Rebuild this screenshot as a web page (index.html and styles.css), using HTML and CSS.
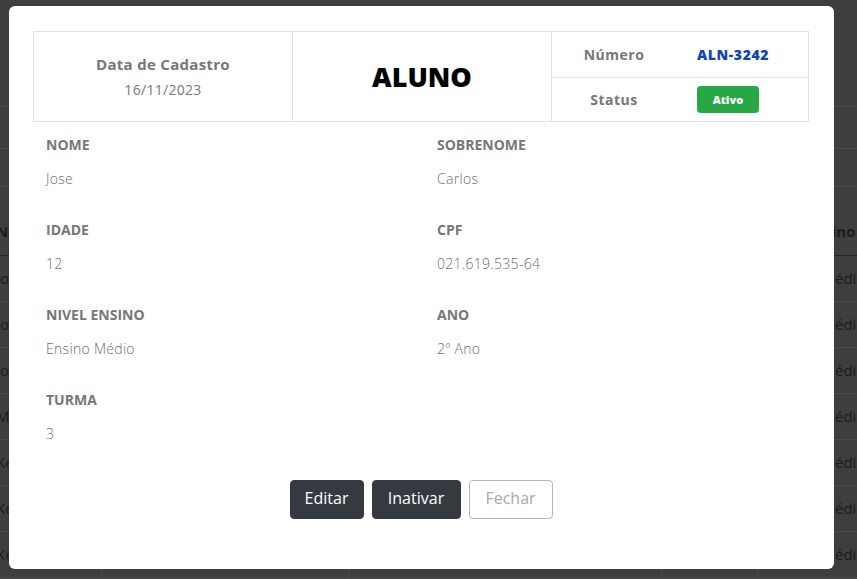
FILE: index.html
```html
<!DOCTYPE html>
<html lang="pt-BR">
<head>
<meta charset="utf-8">
<title>Aluno</title>
<link rel="stylesheet" href="styles.css">
</head>
<body>
<div class="page">
  <div class="band band-top"></div>
  <div class="band band-mid"></div>
  <div class="band band-search"></div>
  <div class="band band-gap"></div>
  <table class="bg-table">
    <thead>
      <tr><th class="c1"><span class="shift">Nome</span></th><th class="c2"></th><th class="c3"></th><th class="c4"></th><th class="c5 h5">Ensino</th></tr>
    </thead>
    <tbody>
      <tr><td class="c1"><span class="shift">Joao</span></td><td></td><td></td><td></td><td class="c5">Médio</td></tr>
      <tr><td class="c1"><span class="shift">Jose</span></td><td></td><td></td><td></td><td class="c5">Médio</td></tr>
      <tr><td class="c1"><span class="shift">Joana</span></td><td></td><td></td><td></td><td class="c5">Médio</td></tr>
      <tr><td class="c1"><span class="shift">Maria</span></td><td></td><td></td><td></td><td class="c5">Médio</td></tr>
      <tr><td class="c1"><span class="shift">Kethlen</span></td><td></td><td></td><td></td><td class="c5">Médio</td></tr>
      <tr><td class="c1"><span class="shift">Kethlen</span></td><td></td><td></td><td></td><td class="c5">Médio</td></tr>
      <tr><td class="c1"><span class="shift">Kethlen</span></td><td></td><td></td><td></td><td class="c5">Médio</td></tr>
    </tbody>
  </table>
</div>

<div class="modal">
  <div class="head">
    <div class="head-cell head-date">
      <div class="head-title">Data de Cadastro</div>
      <div class="head-sub">16/11/2023</div>
    </div>
    <div class="head-cell head-main">ALUNO</div>
    <div class="head-cell head-info">
      <div class="info-row">
        <div class="info-label">Número</div>
        <div class="info-value info-number">ALN-3242</div>
      </div>
      <div class="info-row">
        <div class="info-label">Status</div>
        <div class="info-value"><span class="badge">Ativo</span></div>
      </div>
    </div>
  </div>

  <div class="fields">
    <div class="field"><div class="field-label">NOME</div><div class="field-value">Jose</div></div>
    <div class="field"><div class="field-label">SOBRENOME</div><div class="field-value">Carlos</div></div>
    <div class="field"><div class="field-label">IDADE</div><div class="field-value">12</div></div>
    <div class="field"><div class="field-label">CPF</div><div class="field-value">021.619.535-64</div></div>
    <div class="field"><div class="field-label">NIVEL ENSINO</div><div class="field-value">Ensino Médio</div></div>
    <div class="field"><div class="field-label">ANO</div><div class="field-value">2º Ano</div></div>
    <div class="field"><div class="field-label">TURMA</div><div class="field-value">3</div></div>
  </div>

  <div class="actions">
    <button class="btn btn-dark btn-edit">Editar</button>
    <button class="btn btn-dark btn-inactivate">Inativar</button>
    <button class="btn btn-outline btn-close">Fechar</button>
  </div>
</div>
</body>
</html>
```

FILE: styles.css
```css
* { box-sizing: border-box; }

html, body {
  margin: 0;
  padding: 0;
  width: 857px;
  height: 579px;
  overflow: hidden;
  font-family: "Open Sans", "Liberation Sans", sans-serif;
  background: #3e3e3e;
}

/* ---------- dimmed page behind the modal ---------- */
.page {
  width: 857px;
  height: 579px;
  background: #3e3e3e;
  overflow: hidden;
}
.band { border-bottom: 1px solid #4a4a4a; }
.band-top { height: 107px; }
.band-mid { height: 42px; }
.band-search { height: 38px; }
.band-gap { height: 20px; border-bottom: none; }

.bg-table {
  width: 857px;
  border-collapse: collapse;
  table-layout: fixed;
  color: #1c1c1c;
  font-size: 15px;
}
.bg-table th {
  height: 48px;
  text-align: left;
  font-weight: 700;
  padding: 0 12px;
  border-bottom: 1px solid #262626;
  white-space: nowrap;
  overflow: hidden;
}
.bg-table td {
  height: 46px;
  padding: 0 12px;
  border-bottom: 1px solid #4a4a4a;
  border-left: 1px solid #4a4a4a;
  white-space: nowrap;
  overflow: hidden;
}
.bg-table .c1 { width: 101px; border-left: none; padding-left: 0; }
.bg-table .c2 { width: 247px; }
.bg-table .c3 { width: 313px; }
.bg-table .c4 { width: 96px; }
.bg-table .c5 { width: 100px; padding-left: 64px; }
.bg-table .h5 { padding-left: 49px; }
.shift { display: inline-block; margin-left: -4px; }

/* ---------- modal ---------- */
.modal {
  position: absolute;
  left: 9px;
  top: 6px;
  width: 825px;
  height: 563px;
  background: #ffffff;
  border-radius: 6px;
  padding: 25px 25px 0 24px;
}

.head {
  display: grid;
  grid-template-columns: 259px 259px 1fr;
  height: 91px;
  border: 1px solid #dee2e6;
}
.head-cell { border-right: 1px solid #dee2e6; }
.head-cell:last-child { border-right: none; }

.head-date {
  display: flex;
  flex-direction: column;
  align-items: center;
  justify-content: center;
  color: #777777;
  font-size: 14px;
}
.head-title { font-size: 15px; font-weight: 700; line-height: 26px; letter-spacing: 0.3px; }
.head-sub { font-weight: 400; line-height: 26px; color: #7a7a7a; letter-spacing: 0.3px; }

.head-main {
  display: flex;
  align-items: center;
  justify-content: center;
  font-size: 27px;
  font-weight: 800;
  color: #000000;
}

.head-info {
  display: grid;
  grid-template-rows: 1fr 1fr;
}
.info-row {
  display: grid;
  grid-template-columns: 124px 1fr;
  align-items: center;
}
.info-row + .info-row { border-top: 1px solid #dee2e6; }
.info-label {
  text-align: center;
  font-size: 14px;
  font-weight: 700;
  color: #777777;
  letter-spacing: 0.5px;
}
.info-value { padding-left: 21px; }
.info-number {
  font-size: 14px;
  font-weight: 800;
  color: #0f45b0;
  letter-spacing: 0.6px;
}
.badge {
  display: inline-flex;
  align-items: center;
  justify-content: center;
  width: 62px;
  height: 27px;
  border-radius: 4px;
  background: #28a745;
  color: #ffffff;
  font-size: 11px;
  font-weight: 800;
}

.fields {
  display: grid;
  grid-template-columns: 391px 1fr;
  row-gap: 31px;
  margin-top: 13px;
  padding: 0 13px;
}
.field-label {
  font-size: 14px;
  line-height: 20px;
  font-weight: 700;
  color: #777777;
}
.field-value {
  margin-top: 14px;
  font-size: 14px;
  line-height: 20px;
  font-weight: 300;
  color: #6e6e6e;
  letter-spacing: 0.3px;
}

.actions {
  display: flex;
  justify-content: center;
  gap: 8px;
  margin-top: 36px;
}
.btn {
  height: 39px;
  border-radius: 4px;
  font-family: inherit;
  font-size: 16px;
  font-weight: 500;
  line-height: 1;
  padding: 0 0 3px;
  cursor: pointer;
}
.btn-dark {
  background: #343a40;
  border: 1px solid #343a40;
  color: #ffffff;
}
.btn-outline {
  background: #ffffff;
  border: 1px solid #b5b5b5;
  color: #a8a8a8;
  font-weight: 400;
}
.btn-edit { width: 74px; }
.btn-inactivate { width: 89px; }
.btn-close { width: 84px; }
```
